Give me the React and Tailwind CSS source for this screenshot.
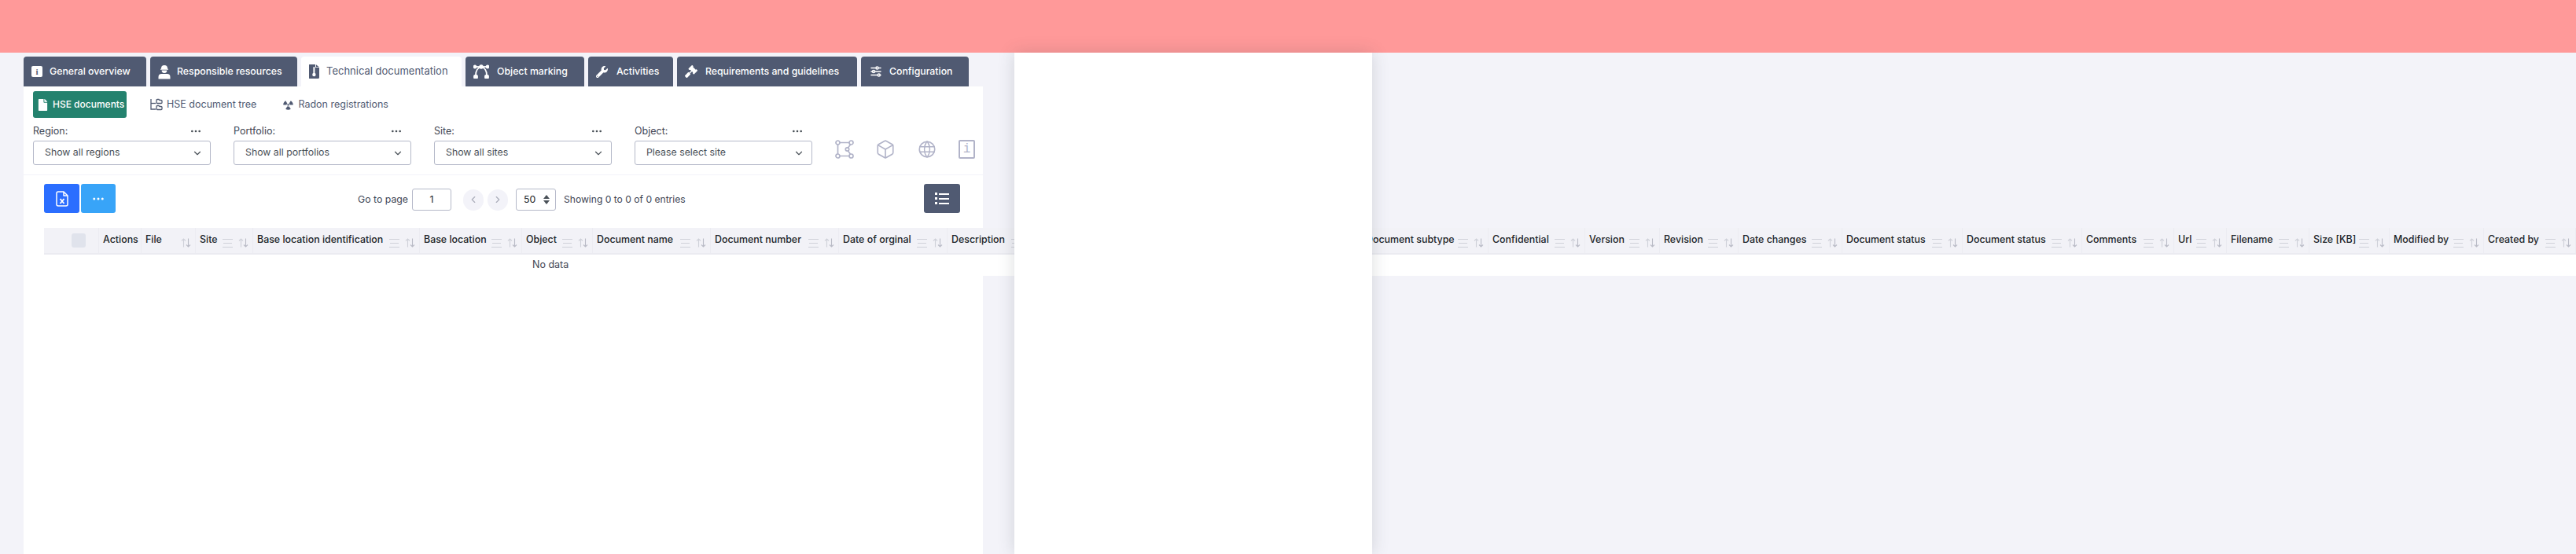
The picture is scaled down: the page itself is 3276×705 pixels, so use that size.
import { ChevronDown, ChevronLeft, ChevronRight, Ellipsis, Box } from "lucide-react"
import { FaFile, FaWrench, FaGavel, FaRadiation } from "react-icons/fa"
import { TbAdjustmentsHorizontal, TbWorld } from "react-icons/tb"

const font = "font-['Inter','Liberation_Sans',sans-serif]"

const columns = [
  { w: "w-[54px]", label: "Actions", noMenu: true, noSort: true },
  { w: "w-[69px]", label: "File", noMenu: true },
  { w: "w-[73px]", label: "Site" },
  { w: "w-[212px]", label: "Base location identification" },
  { w: "w-[130px]", label: "Base location" },
  { w: "w-[90px]", label: "Object" },
  { w: "w-[150px]", label: "Document name" },
  { w: "w-[163px]", label: "Document number" },
  { w: "w-[138px]", label: "Date of orginal" },
  { w: "w-[120px]", label: "Description" },
  { w: "w-[407px]", label: "Document type" },
  { w: "w-[161px]", label: "Document subtype" },
  { w: "w-[123px]", label: "Confidential" },
  { w: "w-[95px]", label: "Version" },
  { w: "w-[100px]", label: "Revision" },
  { w: "w-[132px]", label: "Date changes" },
  { w: "w-[153px]", label: "Document status" },
  { w: "w-[152px]", label: "Document status" },
  { w: "w-[117px]", label: "Comments" },
  { w: "w-[67px]", label: "Url" },
  { w: "w-[105px]", label: "Filename" },
  { w: "w-[102px]", label: "Size [KB]" },
  { w: "w-[120px]", label: "Modified by" },
  { w: "w-[117px]", label: "Created by" },
]

const tabs = [
  { w: "w-[156px]", box: "w-[23px]", label: "General overview", icon: <InfoSolid /> },
  { w: "w-[187px]", box: "w-[24px]", label: "Responsible resources", icon: <HardHatUser /> },
  { w: "w-[204px]", box: "w-[22px]", label: "Technical documentation", active: true, icon: <ThermoFile /> },
  { w: "w-[151px]", box: "w-[30px]", label: "Object marking", icon: <BezierArch /> },
  { w: "w-[108px]", box: "w-[26px]", label: "Activities", icon: <FaWrench size={15} /> },
  { w: "w-[229px]", box: "w-[26px]", label: "Requirements and guidelines", icon: <FaGavel size={16} /> },
  { w: "w-[137px]", box: "w-[26px]", label: "Configuration", icon: <TbAdjustmentsHorizontal size={18} strokeWidth={2} /> },
]

const filters = [
  { label: "Region:", value: "Show all regions" },
  { label: "Portfolio:", value: "Show all portfolios" },
  { label: "Site:", value: "Show all sites" },
  { label: "Object:", value: "Please select site" },
]

function InfoSolid() {
  return (
    <span className="flex h-[14px] w-[14px] items-center justify-center rounded-[2px] bg-white font-['Liberation_Serif',serif] text-[11px] font-bold text-[#505a72]">
      i
    </span>
  )
}

function HardHatUser() {
  return (
    <svg width="16" height="19" viewBox="0 0 16 19" fill="#fff">
      <path d="M4 5a4 4 0 0 1 8 0v1H4z" />
      <rect x="3" y="5.500" width="10" height="1.300" rx="0.600" />
      <path d="M4.600 7.500h6.800a3.400 3.400 0 0 1-6.800 0z" />
      <path d="M0.500 18.500v-2.500a4 4 0 0 1 4-4h7a4 4 0 0 1 4 4v2.500z" />
    </svg>
  )
}

function ThermoFile() {
  return (
    <svg width="13" height="18" viewBox="0 0 13 18">
      <path d="M1.500 0h6.500v4h5v12.500a1.500 1.500 0 0 1-1.500 1.500h-10.500a1.500 1.500 0 0 1-1.500-1.500V1.500A1.500 1.500 0 0 1 1.500 0z" fill="#505a72" />
      <path d="M9 0.200l3.800 3H9z" fill="#505a72" />
      <rect x="5.400" y="3" width="2" height="9" rx="1" fill="#fff" />
      <circle cx="6.400" cy="13" r="2.200" fill="#fff" />
    </svg>
  )
}

function BezierArch() {
  return (
    <svg width="20" height="18" viewBox="0 0 20 18" fill="none" stroke="#fff" strokeWidth="1.800">
      <path d="M2 3h16" />
      <path d="M3 14C3 8 6 4 10 3c4 1 7 5 7 11" />
      <circle cx="2" cy="3" r="1.500" fill="#fff" />
      <circle cx="10" cy="3" r="1.800" fill="#fff" />
      <circle cx="18" cy="3" r="1.500" fill="#fff" />
      <rect x="1" y="14" width="4" height="3.500" rx="1" fill="#fff" />
      <rect x="15" y="14" width="4" height="3.500" rx="1" fill="#fff" />
    </svg>
  )
}

function FolderTree() {
  return (
    <svg width="16" height="16" viewBox="0 0 16 16" fill="none" stroke="currentColor" strokeWidth="1.300">
      <path d="M1 1v13h6" />
      <path d="M1 6.500h6" />
      <path d="M8 2.500a1 1 0 0 1 1-1h2l1 1h2a1 1 0 0 1 1 1v2a1 1 0 0 1-1 1H9a1 1 0 0 1-1-1z" />
      <path d="M8 10.500a1 1 0 0 1 1-1h2l1 1h2a1 1 0 0 1 1 1v2a1 1 0 0 1-1 1H9a1 1 0 0 1-1-1z" />
    </svg>
  )
}

function ShapeNodes() {
  return (
    <svg width="24" height="24" viewBox="0 0 24 24" fill="none" stroke="currentColor" strokeWidth="1.700">
      <circle cx="3.500" cy="3.500" r="2.500" />
      <circle cx="20.500" cy="3.500" r="2.500" />
      <circle cx="3.500" cy="20.500" r="2.500" />
      <circle cx="20.500" cy="20.500" r="2.500" />
      <circle cx="15.500" cy="12" r="2.200" />
      <path d="M6 3.500h12M6 20.500h12M3.500 6v12M19.500 6l-3 4M16.500 14l3 4.200" />
    </svg>
  )
}

function ExcelFile() {
  return (
    <svg width="16" height="20" viewBox="0 0 16 20" fill="none" stroke="#fff" strokeWidth="1.500" strokeLinejoin="round">
      <path d="M3 1h7l5 5v11a2 2 0 0 1-2 2H3a2 2 0 0 1-2-2V3a2 2 0 0 1 2-2z" />
      <path d="M10 1v5h5" />
      <path d="M5.500 10l5 6M10.500 10l-5 6" strokeWidth="1.800" />
    </svg>
  )
}

function SortIcon() {
  return (
    <svg width="13" height="12" viewBox="0 0 13 12" fill="none" strokeWidth="1.100" className="mt-[5px]">
      <path d="M3.500 11.500V1M1 3.500L3.500 1 6 3.500" stroke="#cfd1d9" />
      <path d="M9.500 0.500V11M7 8.500L9.500 11 12 8.500" stroke="#b9bbc6" />
    </svg>
  )
}

function MenuIcon() {
  return (
    <span className="mt-[7px] flex w-[13px] flex-col gap-[4px]">
      <span className="h-px bg-[#cfd1d9]" />
      <span className="mx-[1px] h-px bg-[#cfd1d9]" />
      <span className="h-px bg-[#cfd1d9]" />
    </span>
  )
}

function HeaderCell({ col }) {
  return (
    <div className={`flex h-full shrink-0 items-center justify-between border-r border-[#ececf2] px-[5px] ${col.w}`}>
      <span className="-mt-[1px] whitespace-nowrap text-[12.4px] font-medium text-[#212529]">{col.label}</span>
      <span className="flex items-center gap-[7px]">
        {!col.noMenu && <MenuIcon />}
        {!col.noSort && <SortIcon />}
      </span>
    </div>
  )
}

function FilterSelect({ item }) {
  return (
    <div className="w-[226px]">
      <div className="flex h-[24px] items-center justify-between pr-[11px]">
        <span className="text-[12.5px] text-[#3f4654]">{item.label}</span>
        <Ellipsis size={16} className="text-[#495057]" />
      </div>
      <div className="flex h-[31px] items-center justify-between rounded-[3px] border border-[#b5b9c9] bg-white pl-[14px] pr-[9px] text-[12.3px] text-[#495057]">
        {item.value}
        <ChevronDown size={14} className="text-[#495057]" />
      </div>
    </div>
  )
}

export default function App() {
  return (
    <div className={`relative h-[705px] w-[3276px] overflow-hidden bg-[#f3f3f9] ${font}`}>
      <div className="h-[67px] bg-[#ff9999]" />

      <div className="ml-[30px] mt-[5px] flex gap-[5px]">
        {tabs.map((tab) => (
          <div
            key={tab.label}
            className={`flex h-[38px] shrink-0 items-center rounded-t-[4px] pl-[10px] ${tab.w} ${
              tab.active ? "bg-white text-[13px] text-[#505a72]" : "bg-[#505a72] text-[12.300px] font-medium text-white"
            }`}
          >
            <span className={`flex shrink-0 ${tab.box}`}>{tab.icon}</span>
            <span className="whitespace-nowrap">{tab.label}</span>
          </div>
        ))}
      </div>

      <div className="ml-[30px] h-[595px] w-[1220px] bg-white">
        <div className="flex h-[40px] items-center pl-[12px] pt-[6px]">
          <div className="flex h-[34px] w-[119px] items-center gap-[5px] whitespace-nowrap rounded-[3px] bg-[#24826e] pl-[5px] text-[12px] font-medium text-white">
            <FaFile size={15} />
            HSE documents
          </div>
          <div className="ml-[30px] flex items-center gap-[5px] text-[12.5px] text-[#505a72]">
            <FolderTree />
            HSE document tree
          </div>
          <div className="ml-[34px] flex items-center gap-[6px] text-[12.5px] text-[#505a72]">
            <FaRadiation size={13} />
            Radon registrations
          </div>
        </div>

        <div className="flex h-[73px] border-b border-[#f3f3f9] pl-[12px] pt-[5px]">
          <div className="flex gap-[29px]">
            {filters.map((f) => (
              <FilterSelect key={f.label} item={f} />
            ))}
          </div>
          <div className="ml-[29px] mt-[22px] flex h-[26px] items-center gap-[27px] text-[#b1b3c8]">
            <ShapeNodes />
            <Box size={26} strokeWidth={1.5} />
            <TbWorld size={26} strokeWidth={1.5} />
            <span className="flex h-[24px] w-[21px] items-center justify-center rounded-[2px] border-2 border-[#b1b3c8] font-['Liberation_Mono',monospace] text-[16px] leading-none">
              i
            </span>
          </div>
        </div>

        <div className="flex h-[67px] items-start pl-[26px] pr-[29px] pt-[11px]">
          <div className="flex h-[37px] w-[91px] shrink-0 gap-[2px]">
            <div className="flex w-[45px] items-center justify-center rounded-[3px] bg-[#2b6eff]">
              <ExcelFile />
            </div>
            <div className="flex w-[44px] items-center justify-center rounded-[3px] bg-[#38a4f8] text-white">
              <Ellipsis size={18} />
            </div>
          </div>
          <div className="ml-[308px] mt-[6px] flex items-center text-[12.3px] text-[#3f4654]">
            <span className="w-[69px] whitespace-nowrap">Go to page</span>
            <span className="flex h-[28px] w-[50px] items-center justify-center rounded-[3px] border border-[#b5b9c9] text-[#212529]">
              1
            </span>
            <span className="ml-[15px] flex h-[27px] w-[26px] items-center justify-center rounded-full bg-[#f3f3f9] text-[#a9acb9]">
              <ChevronLeft size={14} />
            </span>
            <span className="ml-[5px] flex h-[27px] w-[26px] items-center justify-center rounded-full bg-[#f3f3f9] text-[#a9acb9]">
              <ChevronRight size={14} />
            </span>
            <span className="ml-[10px] flex h-[28px] w-[51px] items-center justify-between rounded-[3px] border border-[#b5b9c9] pl-[9px] pr-[7px] text-[#212529]">
              50
              <span className="flex flex-col gap-[2px]">
                <span className="h-0 w-0 border-x-[4px] border-b-[5px] border-x-transparent border-b-[#495057]" />
                <span className="h-0 w-0 border-x-[4px] border-t-[5px] border-x-transparent border-t-[#495057]" />
              </span>
            </span>
            <span className="ml-[10px] whitespace-nowrap text-[12.1px]">Showing 0 to 0 of 0 entries</span>
          </div>
          <div className="ml-auto flex h-[37px] w-[46px] shrink-0 items-center justify-center rounded-[3px] bg-[#505a72]">
            <span className="flex w-[18px] flex-col gap-[3px]">
              <span className="flex items-center gap-[2px]"><span className="h-[3px] w-[3px] bg-white" /><span className="h-[2px] flex-1 bg-white" /></span>
              <span className="flex items-center gap-[2px]"><span className="h-[3px] w-[3px] bg-white" /><span className="h-[2px] flex-1 bg-white" /></span>
              <span className="flex items-center gap-[2px]"><span className="h-[3px] w-[3px] bg-white" /><span className="h-[2px] flex-1 bg-white" /></span>
            </span>
          </div>
        </div>

        <div className="ml-[26px] w-[3220px]">
          <div className="flex h-[34px] border-b-[2px] border-[#ebebf1] bg-[#f2f2f7]">
            <div className="flex h-full w-[70px] shrink-0 items-center border-r border-[#ececf2] pl-[35px]">
              <span className="h-[18px] w-[18px] rounded-[3px] bg-[#e0e3ec]" />
            </div>
            {columns.map((col, i) => (
              <HeaderCell key={i} col={col} />
            ))}
          </div>
          <div className="flex h-[27px] items-center bg-white pl-[621px] text-[12.5px] text-[#3f4654]">
            No data
          </div>
        </div>
      </div>

      <div className="absolute bottom-0 left-[1290px] top-[67px] w-[455px] bg-white shadow-[0_0_20px_rgba(56,65,74,0.18)]" />
    </div>
  )
}
